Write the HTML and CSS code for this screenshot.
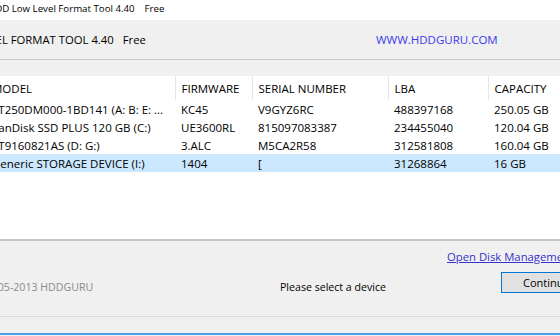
FILE: index.html
```html
<!DOCTYPE html>
<html lang="en">

<head>
    <meta charset="UTF-8">
    <meta name="viewport" content="width=device-width, initial-scale=1.0">
    <title>HDD Low Level Format Tool</title>
    <link rel="stylesheet" href="styles.css">
</head>

<body>
    <div class="titlebar">
        <span class="ttl">HDD Low Level Format Tool 4.40</span><span class="free">Free</span>
    </div>

    <div class="banner">
        <span class="bname">HDD LOW LEVEL FORMAT TOOL 4.40</span><span class="bfree">Free</span><span class="site">WWW.HDDGURU.COM</span>
    </div>

    <div class="main">
        <div class="list">
            <table class="drives">
                <colgroup>
                    <col class="c1"><col class="c2"><col class="c3"><col class="c4"><col class="c5">
                </colgroup>
                <tr>
                    <th>MODEL</th>
                    <th>FIRMWARE</th>
                    <th>SERIAL NUMBER</th>
                    <th>LBA</th>
                    <th>CAPACITY</th>
                </tr>
                <tr>
                    <td>ST250DM000-1BD141 (A: B: E: ...</td>
                    <td>KC45</td>
                    <td>V9GYZ6RC</td>
                    <td>488397168</td>
                    <td>250.05 GB</td>
                </tr>
                <tr>
                    <td>SanDisk SSD PLUS 120 GB (C:)</td>
                    <td>UE3600RL</td>
                    <td>815097083387</td>
                    <td>234455040</td>
                    <td>120.04 GB</td>
                </tr>
                <tr>
                    <td>ST9160821AS (D: G:)</td>
                    <td>3.ALC</td>
                    <td>M5CA2R58</td>
                    <td>312581808</td>
                    <td>160.04 GB</td>
                </tr>
                <tr class="sel">
                    <td>Generic STORAGE DEVICE (I:)</td>
                    <td>1404</td>
                    <td>[</td>
                    <td>31268864</td>
                    <td>16 GB</td>
                </tr>
            </table>
        </div>
    </div>

    <div class="footer">
        <span class="dmlink">Open Disk Management</span>
        <span class="copy">(C) 2005-2013 HDDGURU</span>
        <span class="status">Please select a device</span>
        <button class="cont">Continue &gt;&gt;&gt;</button>
    </div>

    <div class="bottom"></div>
    <div class="taskline"></div>
</body>

</html>
```

FILE: styles.css
```css
body {
    margin: 0;
    width: 560px;
    height: 336px;
    overflow: hidden;
    background-color: #f0f0f0;
    font-family: "Open Sans", "Noto Sans", sans-serif;
    font-size: 11px;
    color: #000;
}

.titlebar {
    height: 20px;
    line-height: 18px;
    background-color: #fff;
    white-space: nowrap;
    font-size: 9.7px;
}

.ttl {
    margin-left: -12px;
}

.free {
    margin-left: 10px;
}

.banner {
    height: 39px;
    line-height: 39px;
    border-bottom: 1px solid #c9c9c9;
    white-space: nowrap;
    font-size: 11.3px;
}

.bname {
    margin-left: -79px;
}

.bfree {
    margin-left: 9px;
}

.site {
    margin-left: 230px;
    color: #3a3aee;
    font-size: 11.5px;
}

.main {
    padding-top: 16px;
}

.list {
    height: 163px;
    background-color: #fff;
    border-bottom: 2px solid #c6c6c6;
    overflow: hidden;
}

.drives {
    border-collapse: collapse;
    table-layout: fixed;
    width: 601px;
    margin-left: -14px;
    font-size: 11.5px;
}

.c1 { width: 189px; }
.c2 { width: 77px; }
.c3 { width: 136px; }
.c4 { width: 100px; }
.c5 { width: 99px; }

th {
    height: 24px;
    padding: 0 0 0 6px;
    font-weight: normal;
    text-align: left;
    white-space: nowrap;
    overflow: hidden;
}

th + th {
    border-left: 1px solid #e5e5e5;
}

td {
    height: 18px;
    padding: 0 0 0 6px;
    white-space: nowrap;
    overflow: hidden;
}

.sel td {
    background-color: #cce8ff;
}

.footer {
    height: 75px;
    border-bottom: 1px solid #dadada;
    display: grid;
    grid-template-columns: 280px 167px 54px 1fr;
    grid-template-rows: 24px 21px;
    row-gap: 7px;
    white-space: nowrap;
    font-size: 10.6px;
}

.dmlink {
    grid-column: 3 / 5;
    align-self: end;
    color: #3434cc;
    text-decoration: underline;
    line-height: 16px;
    font-size: 11.3px;
}

.copy {
    grid-column: 1;
    grid-row: 2;
    margin-left: -30px;
    margin-bottom: -2px;
    color: #8a8a8a;
    align-self: end;
    line-height: 16px;
}

.status {
    grid-column: 2 / 4;
    grid-row: 2;
    align-self: end;
    margin-bottom: -2px;
    line-height: 16px;
}

.cont {
    grid-column: 4;
    grid-row: 2;
    width: 80px;
    height: 21px;
    margin: 0;
    padding: 0 0 0 21px;
    text-align: left;
    background-color: #e1e1e1;
    border: 1px solid #0078d7;
    border-radius: 0;
    font-family: "Open Sans", "Noto Sans", sans-serif;
    font-size: 11px;
    color: #000;
}

.bottom {
    height: 16px;
}

.taskline {
    height: 2px;
    background-color: #4aa0e6;
}
```
